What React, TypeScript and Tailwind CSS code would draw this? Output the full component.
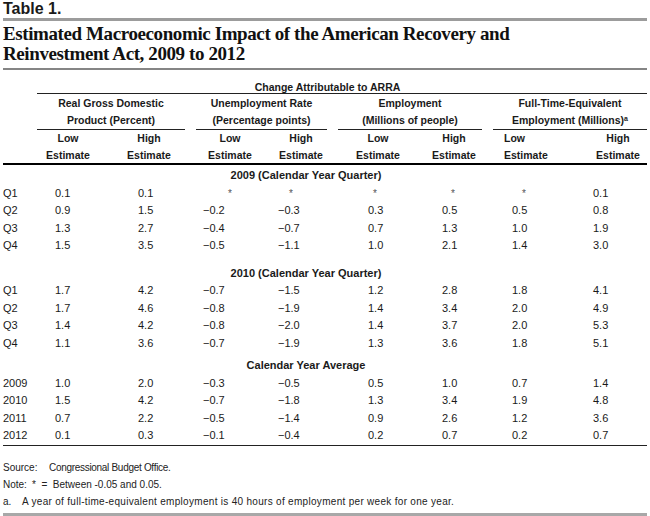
const sans = "font-['Liberation_Sans',Arial,sans-serif]";

type Section = { title: string; rows: string[][] };

const SECTIONS: Section[] = [
  {
    title: "2009 (Calendar Year Quarter)",
    rows: [
      ["Q1", "0.1", "0.1", "*", "*", "*", "*", "*", "0.1"],
      ["Q2", "0.9", "1.5", "-0.2", "-0.3", "0.3", "0.5", "0.5", "0.8"],
      ["Q3", "1.3", "2.7", "-0.4", "-0.7", "0.7", "1.3", "1.0", "1.9"],
      ["Q4", "1.5", "3.5", "-0.5", "-1.1", "1.0", "2.1", "1.4", "3.0"],
    ],
  },
  {
    title: "2010 (Calendar Year Quarter)",
    rows: [
      ["Q1", "1.7", "4.2", "-0.7", "-1.5", "1.2", "2.8", "1.8", "4.1"],
      ["Q2", "1.7", "4.6", "-0.8", "-1.9", "1.4", "3.4", "2.0", "4.9"],
      ["Q3", "1.4", "4.2", "-0.8", "-2.0", "1.4", "3.7", "2.0", "5.3"],
      ["Q4", "1.1", "3.6", "-0.7", "-1.9", "1.3", "3.6", "1.8", "5.1"],
    ],
  },
  {
    title: "Calendar Year Average",
    rows: [
      ["2009", "1.0", "2.0", "-0.3", "-0.5", "0.5", "1.0", "0.7", "1.4"],
      ["2010", "1.5", "4.2", "-0.7", "-1.8", "1.3", "3.4", "1.9", "4.8"],
      ["2011", "0.7", "2.2", "-0.5", "-1.4", "0.9", "2.6", "1.2", "3.6"],
      ["2012", "0.1", "0.3", "-0.1", "-0.4", "0.2", "0.7", "0.2", "0.7"],
    ],
  },
];

// where the asterisk sits inside its column
const STAR_PAD: Record<number, string> = {
  1: "pl-[4px]",
  2: "pl-[4px]",
  3: "pl-[25px]",
  4: "pl-[11px]",
  5: "pl-[5px]",
  6: "pl-[9px]",
  7: "pl-[10px]",
  8: "pl-[4px]",
};

const GROUPS = [
  { w: "w-[148px]", l1: "Real Gross Domestic", l2: "Product (Percent)" },
  { w: "w-[131px]", l1: "Unemployment Rate", l2: "(Percentage points)" },
  { w: "w-[144px]", l1: "Employment", l2: "(Millions of people)" },
];

function DataRow({ row }: { row: string[] }) {
  return (
    <div className="grid h-[17.5px] grid-cols-[52px_83px_65px_75px_90px_74px_70px_81px_1fr] leading-[17.5px]">
      {row.map((v, i) =>
        v === "*" ? (
          <div key={i} className={`${STAR_PAD[i]} text-[10px] text-[#555]`}>
            *
          </div>
        ) : (
          <div key={i}>{v.replace("-", "\u2212")}</div>
        ),
      )}
    </div>
  );
}

export default function App() {
  return (
    <div className={`${sans} h-[516px] w-[650px] overflow-hidden bg-white px-[3px] text-[#1a1a1a]`}>
      <div className="h-[17px] text-[16px] font-bold leading-[17px]">Table 1.</div>
      <div className="mt-[1px] h-[3px] bg-[#9c9c9c]" />

      <h1 className="mt-[3px] font-['Liberation_Serif','Times_New_Roman',serif] text-[19px] font-bold leading-[20px] tracking-[-0.4px] text-[#111]">
        Estimated Macroeconomic Impact of the American Recovery and
        <br />
        Reinvestment Act, 2009 to 2012
      </h1>
      <div className="mt-[4px] h-[2px] bg-[#858585]" />

      <div className="mt-[11px]">
        {/* Column headings */}
        <div className="ml-[34px] border-b border-[#222] pt-[1px] pr-[29px] text-center text-[10.5px] font-bold leading-[11px]">
          Change Attributable to ARRA
        </div>

        <div className="flex pt-[1px] text-[10.5px] font-bold leading-[17px]">
          <div className="w-[34px]" />
          {GROUPS.map((g, i) => (
            <div key={g.l1} className="flex">
              {i > 0 && <div className="w-[11px]" />}
              <div className={`${g.w} border-b border-[#222] text-center`}>
                <div>{g.l1}</div>
                <div>{g.l2}</div>
              </div>
            </div>
          ))}
          <div className="w-[11px]" />
          <div className="flex-1 border-b border-[#222] text-center">
            <div>Full-Time-Equivalent</div>
            <div>
              Employment (Millions)<sup className="text-[7px]">a</sup>
            </div>
          </div>
        </div>

        <div className="grid h-[33px] grid-cols-[34px_62px_100px_62px_80px_74px_78px_96px_1fr] text-[10.5px] font-bold leading-[17px]">
          <div />
          {["Low", "High", "Low", "High", "Low", "High"].map((t, i) => (
            <div key={i} className="text-center">
              <div>{t}</div>
              <div>Estimate</div>
            </div>
          ))}
          <div className="pl-[11px]">
            <div>Low</div>
            <div>Estimate</div>
          </div>
          <div className="text-center">
            <div>High</div>
            <div>Estimate</div>
          </div>
        </div>
        <div className="h-[2px] bg-black" />

        {/* Body */}
        <div className="pt-[2px] text-[11px]">
          {SECTIONS.map((s, si) => (
            <div key={s.title} className={si === 1 ? "mt-[10px]" : si === 2 ? "mt-[5px]" : ""}>
              <div className="h-[17.5px] pr-[38px] text-center text-[11px] font-bold leading-[17.5px]">
                {s.title}
              </div>
              {s.rows.map((r) => (
                <DataRow key={r[0]} row={r} />
              ))}
            </div>
          ))}
        </div>
        <div className="h-px bg-[#222]" />

        {/* Notes */}
        <div className="mt-[13px] text-[10px] leading-[17px] text-[#222]">
          <div className="flex">
            <span className="w-[46px]">Source:</span>
            <span className="tracking-[-0.3px]">Congressional Budget Office.</span>
          </div>
          <div className="flex">
            <span className="w-[29px]">Note:</span>
            <span>*&nbsp; =&nbsp; Between -0.05 and 0.05.</span>
          </div>
          <div className="flex">
            <span className="w-[19px]">a.</span>
            <span className="tracking-[0.3px]">
              A year of full-time-equivalent employment is 40 hours of employment per week for one year.
            </span>
          </div>
        </div>
      </div>
      <div className="mt-[3px] h-[4px] bg-[#a8a8a8]" />
    </div>
  );
}
